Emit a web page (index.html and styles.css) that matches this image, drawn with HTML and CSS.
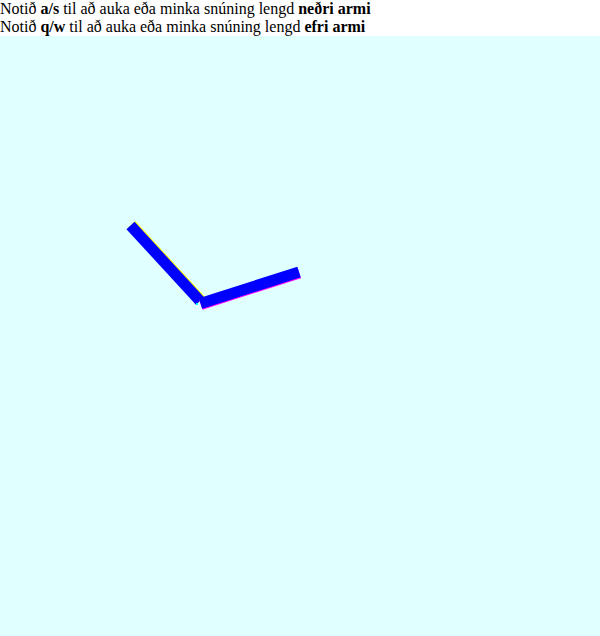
FILE: index.html
```html
<!DOCTYPE html>
<html>
<head>
<meta charset="utf-8">
<link rel="stylesheet" href="styles.css">
</head>
<body>
<div class="info">Notið <b>a/s</b> til að auka eða minka snúning lengd <b>neðri armi</b></div>
<div class="info">Notið <b>q/w</b> til að auka eða minka snúning lengd <b>efri armi</b></div>
<div class="stage">
  <svg class="scene" width="600" height="600" viewBox="0 0 600 600" xmlns="http://www.w3.org/2000/svg">
    <polygon points="135.3,185.1 127.2,192.5 196.7,268 204.8,260.6" fill="#ffff00"/>
    <polygon points="134.55,185.78 126.45,193.22 195.95,268.72 204.05,261.28" fill="#0000ff"/>
    <polygon points="199.1,263.2 202.5,273.7 301,242.2 297.6,231.7" fill="#ff00ff"/>
    <polygon points="198.82,262.26 202.18,272.74 300.68,241.24 297.32,230.76" fill="#0000ff"/>
    <rect x="196" y="267" width="2" height="2" fill="#00ffff"/>
  </svg>
</div>
</body>
</html>
```
FILE: styles.css
```css
html, body {
  margin: 0;
  padding: 0;
}
body {
  font-family: "Liberation Serif", "Times New Roman", serif;
  font-size: 16px;
  color: #000;
  background: #fff;
  width: 600px;
}
.info {
  line-height: 18px;
  height: 18px;
  white-space: nowrap;
}
.stage {
  background: #e0ffff;
  height: 600px;
}
.scene {
  display: block;
}
```
